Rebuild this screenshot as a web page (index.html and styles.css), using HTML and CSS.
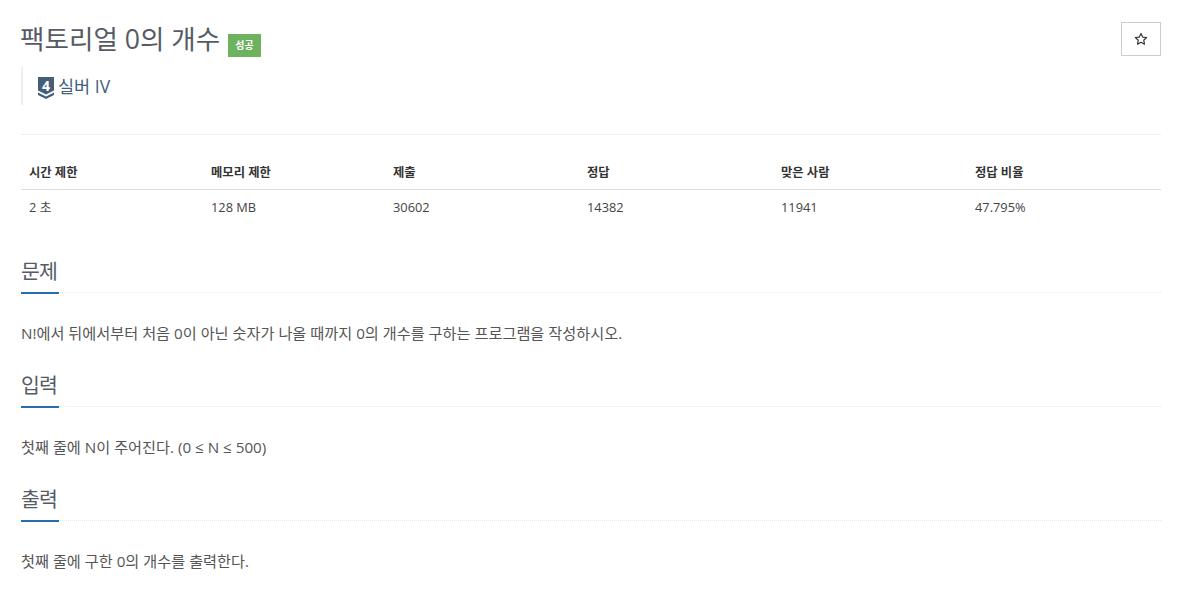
FILE: index.html
```html
<!DOCTYPE html>
<html lang="ko">
<head>
    <meta charset="UTF-8">
    <title>팩토리얼 0의 개수</title>
    <link rel="stylesheet" href="styles.css">
</head>
<body>
    <div class="page">
        <div class="title-row">
            <h1 class="title">팩토리얼 0의 개수 <span class="badge">성공</span></h1>
            <button class="star-btn">
                <svg width="14" height="14" viewBox="0 0 24 24"><path d="M12 2.500l2.900 6.200 6.800.8-5 4.600 1.300 6.700-6-3.400-6 3.400 1.300-6.700-5-4.600 6.800-.8z" fill="none" stroke="#333" stroke-width="2" stroke-linejoin="round"/></svg>
            </button>
        </div>
        <div class="tier">
            <svg class="tier-icon" width="16" height="24" viewBox="0 -2 16 24">
                <path d="M0 0h16v13.500l-8 4-8-4z" fill="#435f7a"/>
                <path d="M0 15.500l8 4 8-4v2.500l-8 4-8-4z" fill="#435f7a"/>
                <text x="8" y="14" text-anchor="middle" class="tier-num">4</text>
            </svg>
            <span>실버 IV</span>
        </div>
        <table class="info">
            <thead>
                <tr><th>시간 제한</th><th>메모리 제한</th><th>제출</th><th>정답</th><th>맞은 사람</th><th>정답 비율</th></tr>
            </thead>
            <tbody>
                <tr><td>2 초</td><td>128 MB</td><td>30602</td><td>14382</td><td>11941</td><td>47.795%</td></tr>
            </tbody>
        </table>
        <section class="sec">
            <h2 class="sec-head"><span>문제</span></h2>
            <p>N!에서 뒤에서부터 처음 0이 아닌 숫자가 나올 때까지 0의 개수를 구하는 프로그램을 작성하시오.</p>
        </section>
        <section class="sec">
            <h2 class="sec-head"><span>입력</span></h2>
            <p>첫째 줄에 N이 주어진다. (0 ≤ N ≤ 500)</p>
        </section>
        <section class="sec">
            <h2 class="sec-head"><span>출력</span></h2>
            <p>첫째 줄에 구한 0의 개수를 출력한다.</p>
        </section>
    </div>
</body>
</html>
```
FILE: styles.css
```css
* {
    margin: 0;
    padding: 0;
    box-sizing: border-box;
}

body {
    font-family: "Open Sans", "Noto Sans CJK KR", sans-serif;
    color: #333;
    background: #fff;
    overflow: hidden;
}

.page {
    padding: 0 20px 0 21px;
}

.title-row {
    display: flex;
    justify-content: space-between;
    align-items: flex-start;
    padding-top: 22px;
    height: 67px;
}

.title {
    font-size: 26.600px;
    line-height: 34px;
    font-weight: 400;
    color: #555b66;
    margin-left: -1px;
}

.badge {
    display: inline-block;
    background: #6cb25f;
    color: #fff;
    font-size: 10px;
    font-weight: 700;
    line-height: 13px;
    padding: 5px 7px;
    vertical-align: 0;
    margin-left: 1px;
}

.star-btn {
    width: 40px;
    height: 34px;
    background: #fff;
    border: 1px solid #ccc;
    display: flex;
    align-items: center;
    justify-content: center;
}

.tier {
    display: flex;
    align-items: center;
    gap: 4px;
    height: 38px;
    border-left: 2px solid #eee;
    padding-left: 15px;
    font-size: 17.500px;
    color: #435f7a;
}

.tier span {
    margin-bottom: 2px;
}

.tier-icon {
    margin-top: 2px;
}

.tier-num {
    font-size: 14px;
    font-weight: 700;
    fill: #fff;
    font-family: "Open Sans", sans-serif;
}

.info {
    width: 100%;
    border-collapse: collapse;
    border-top: 1px solid #eee;
    margin-top: 29px;
    table-layout: fixed;
}

.info th:nth-child(-n+2) {
    width: 182px;
}

.info th {
    text-align: left;
    font-size: 12.300px;
    font-weight: 700;
    padding: 29px 8px 8px;
    line-height: 17px;
    border-bottom: 1px solid #ddd;
}

.info td {
    font-size: 12.800px;
    padding: 9px 8px;
    line-height: 17px;
    color: #444;
}

.sec {
    margin-bottom: 27px;
}

.info + .sec {
    margin-top: 31px;
}

.sec-head {
    font-weight: 400;
    color: #555b66;
    border-bottom: 1px dotted #e8e8e8;
    height: 37px;
}

.sec-head span {
    display: block;
    height: 38px;
    width: 38px;
    font-size: 20.500px;
    letter-spacing: -0.8px;
    line-height: 30px;
    white-space: nowrap;
    border-bottom: 2px solid #2b6cb0;
}

.sec p {
    font-size: 15.200px;
    line-height: 20px;
    padding-top: 30px;
    color: #555;
}
```
